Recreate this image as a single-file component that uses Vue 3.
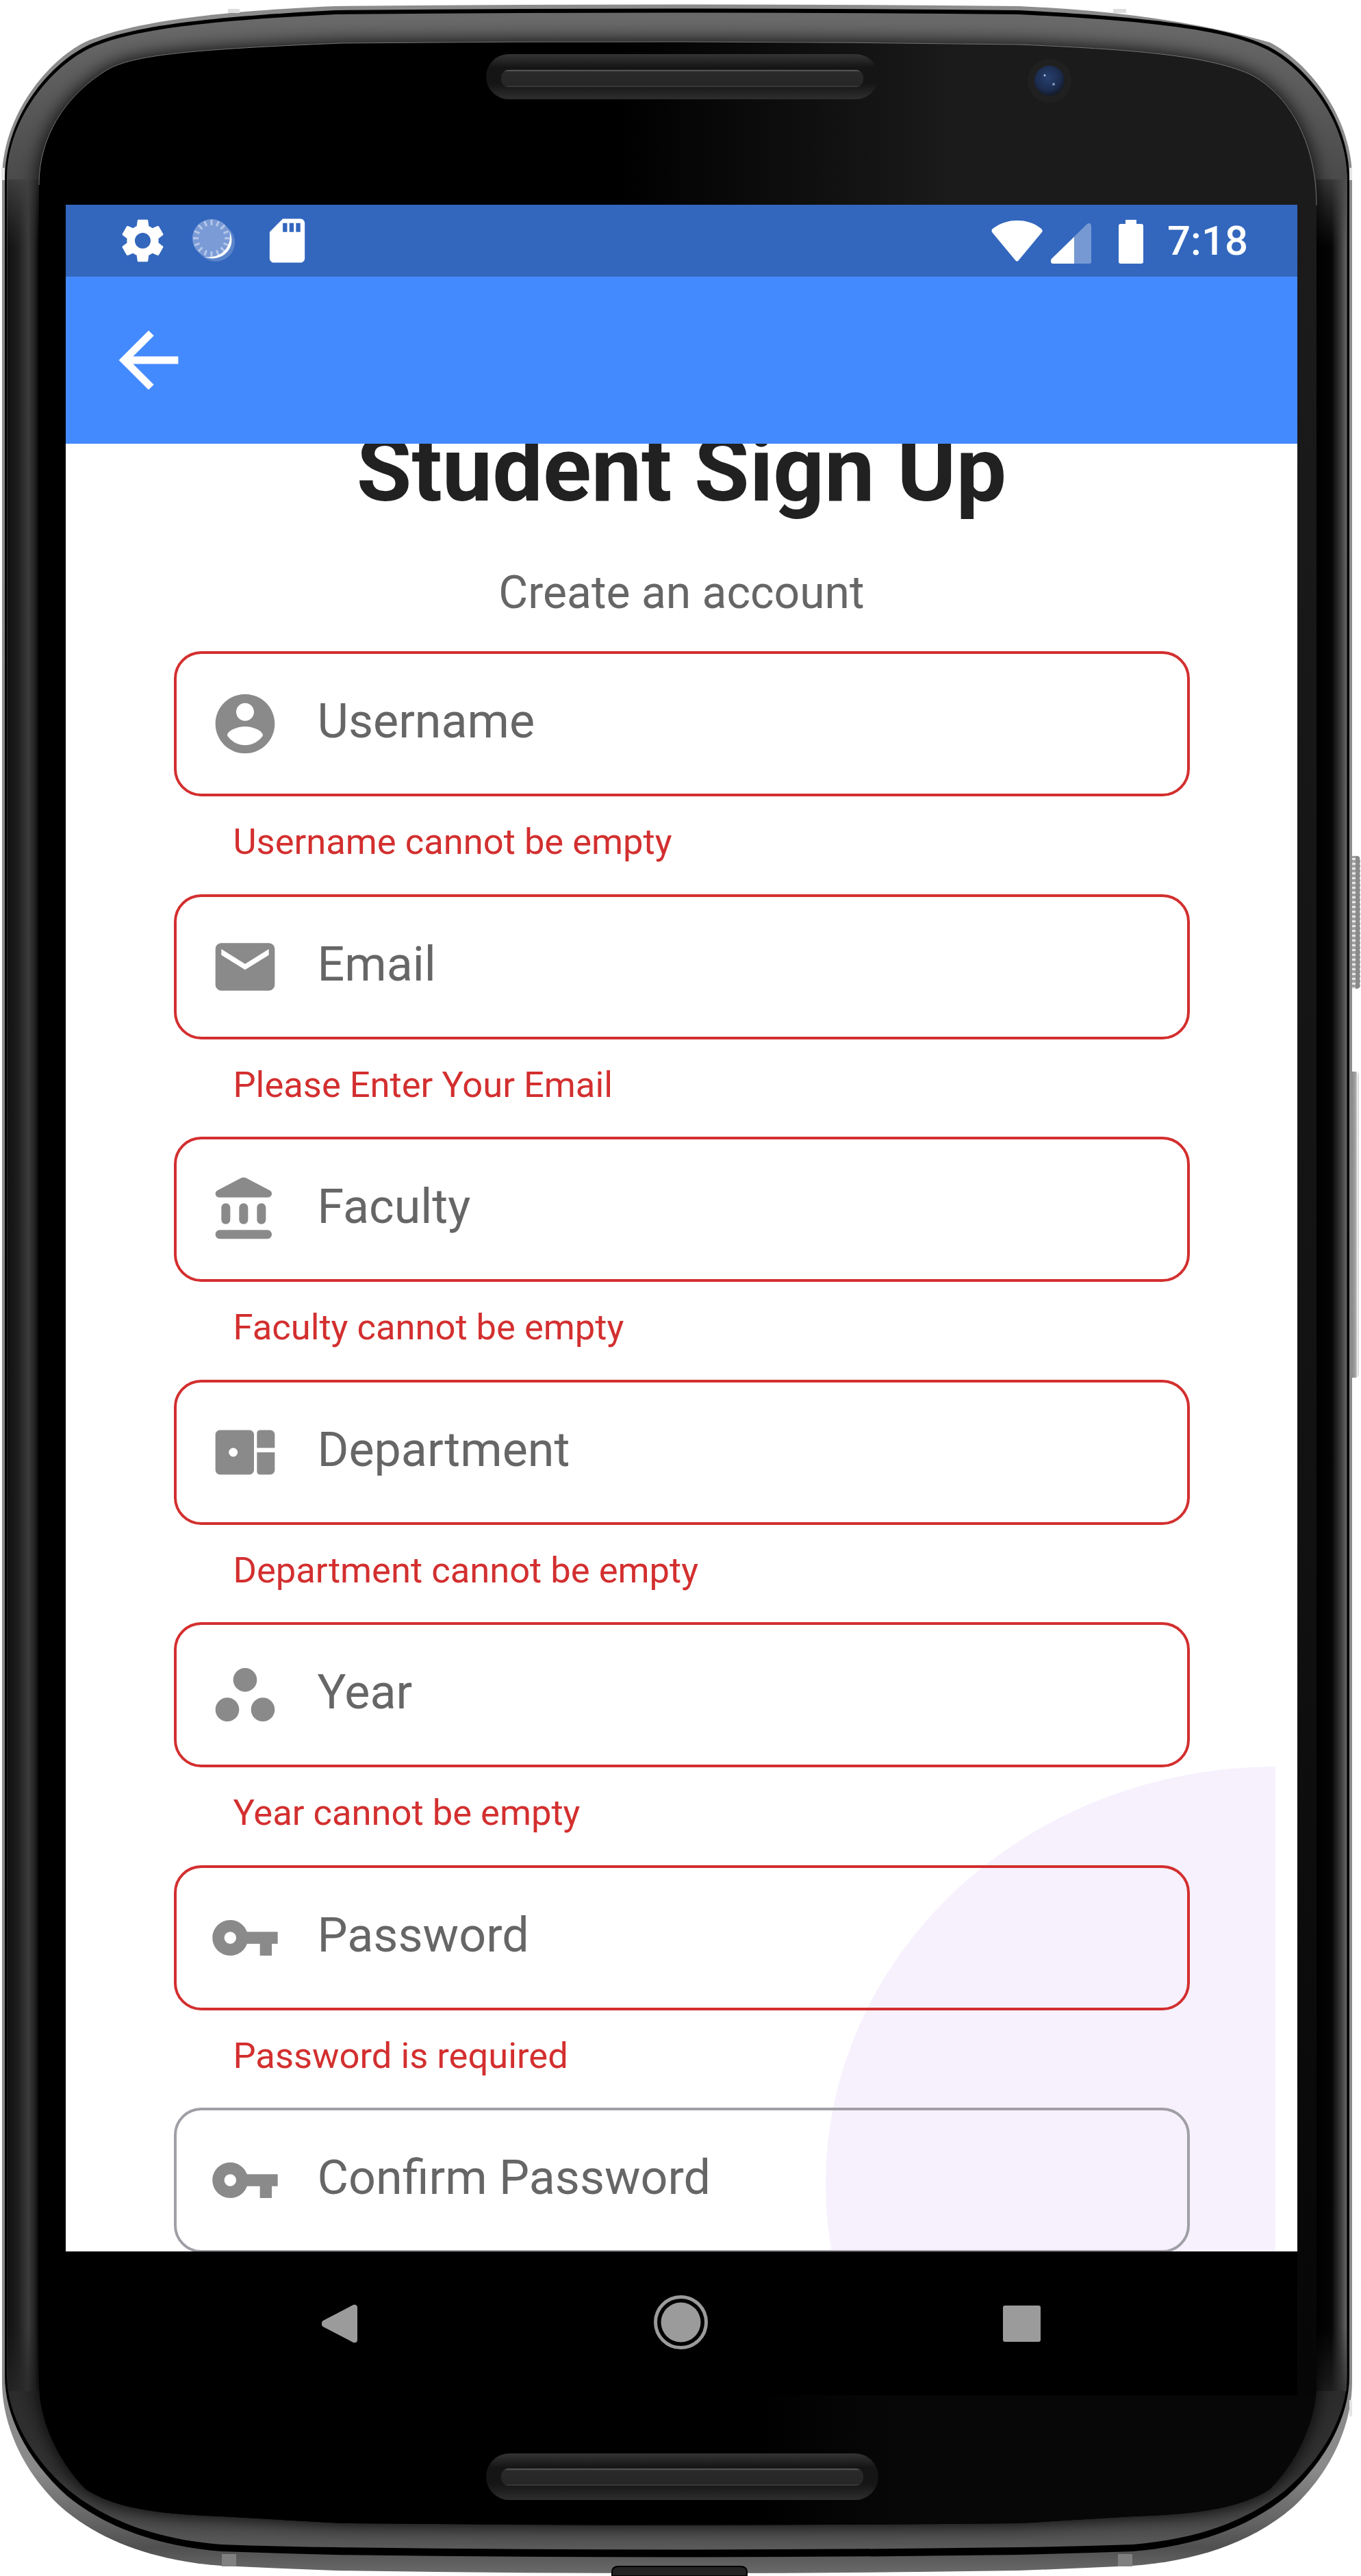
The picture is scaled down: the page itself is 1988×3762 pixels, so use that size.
<template>
  <div class="device">
    <!-- phone body drawn behind the screen -->
    <svg class="frame" width="1988" height="3762" viewBox="0 0 1988 3762">
      <defs>
        <linearGradient id="metal" x1="0" y1="0" x2="0" y2="1">
          <stop offset="0" stop-color="#8c8c8c" />
          <stop offset="0.96" stop-color="#8a8a8a" />
          <stop offset="0.99" stop-color="#505050" />
          <stop offset="1" stop-color="#6a6a6a" />
        </linearGradient>
        <linearGradient id="bezelFill" x1="0" y1="0" x2="0" y2="1">
          <stop offset="0" stop-color="#6a6a6a" />
          <stop offset="0.1" stop-color="#3a3a3a" />
          <stop offset="0.9" stop-color="#222" />
          <stop offset="0.97" stop-color="#333" />
          <stop offset="1" stop-color="#5a5a5a" />
        </linearGradient>
        <linearGradient id="glassTop" gradientUnits="userSpaceOnUse" x1="900" y1="0" x2="1400" y2="0">
          <stop offset="0" stop-color="#000" />
          <stop offset="1" stop-color="#1b1b1b" />
        </linearGradient>
        <linearGradient id="glassBottom" gradientUnits="userSpaceOnUse" x1="1100" y1="0" x2="1300" y2="0">
          <stop offset="0" stop-color="#000" />
          <stop offset="1" stop-color="#070707" />
        </linearGradient>
        <linearGradient id="rightStrip" x1="0" y1="0" x2="0" y2="1">
          <stop offset="0" stop-color="#1b1b1b" />
          <stop offset="0.6" stop-color="#111" />
          <stop offset="1" stop-color="#060606" />
        </linearGradient>
        <linearGradient id="sideLeft" x1="0" y1="0" x2="1" y2="0">
          <stop offset="0" stop-color="#111" />
          <stop offset="0.34" stop-color="#1e1e1e" />
          <stop offset="0.66" stop-color="#3c3c3c" />
          <stop offset="0.88" stop-color="#202020" />
          <stop offset="1" stop-color="#000" />
        </linearGradient>
        <linearGradient id="sideRight" x1="0" y1="0" x2="1" y2="0">
          <stop offset="0" stop-color="#000" />
          <stop offset="0.5" stop-color="#040404" />
          <stop offset="0.8" stop-color="#3a3a3a" />
          <stop offset="1" stop-color="#666" />
        </linearGradient>
        <linearGradient id="fadeEnds" gradientUnits="userSpaceOnUse" x1="0" y1="230" x2="0" y2="3530">
          <stop offset="0" stop-color="#000" />
          <stop offset="0.04" stop-color="#fff" />
          <stop offset="0.96" stop-color="#fff" />
          <stop offset="1" stop-color="#000" />
        </linearGradient>
        <mask id="sideMask" maskUnits="userSpaceOnUse" x="0" y="0" width="1988" height="3762">
          <rect x="0" y="0" width="1988" height="3762" fill="url(#fadeEnds)" />
        </mask>
        <linearGradient id="speakerOuter" x1="0" y1="0" x2="0" y2="1">
          <stop offset="0" stop-color="#343434" />
          <stop offset="0.3" stop-color="#151515" />
          <stop offset="0.65" stop-color="#151515" />
          <stop offset="1" stop-color="#2e2e2e" />
        </linearGradient>
        <linearGradient id="speakerInner" x1="0" y1="0" x2="0" y2="1">
          <stop offset="0" stop-color="#666" />
          <stop offset="0.12" stop-color="#2a2a2a" />
          <stop offset="0.9" stop-color="#262626" />
          <stop offset="1" stop-color="#444" />
        </linearGradient>
        <radialGradient id="lens" cx="0.45" cy="0.4" r="0.6">
          <stop offset="0" stop-color="#27406f" />
          <stop offset="0.7" stop-color="#1c2c4e" />
          <stop offset="1" stop-color="#141a28" />
        </radialGradient>
        <linearGradient id="longKey" x1="0" y1="0" x2="1" y2="0">
          <stop offset="0" stop-color="#6f6f6f" />
          <stop offset="0.7" stop-color="#a8a8a8" />
          <stop offset="0.85" stop-color="#f4f4f4" />
          <stop offset="1" stop-color="#c8c8c8" />
        </linearGradient>
        <pattern id="ridges" patternUnits="userSpaceOnUse" width="12" height="7">
          <rect width="12" height="7" fill="#8a8a8a" />
          <rect x="6" y="0" width="6" height="3" fill="#e8e8e8" />
          <rect x="6" y="3" width="6" height="4" fill="#a0a0a0" />
        </pattern>
        <filter id="soft" filterUnits="userSpaceOnUse" x="0" y="0" width="1988" height="3762">
          <feGaussianBlur stdDeviation="14" />
        </filter>
        <clipPath id="glassClip"><path :d="glass" /></clipPath>
      </defs>

      <!-- side keys -->
      <rect x="1970" y="1250" width="17" height="194" rx="5" fill="url(#ridges)" />
      <rect x="1970" y="1565" width="15" height="447" rx="5" fill="url(#longKey)" />

      <path :d="outer" fill="url(#metal)" />
      <path :d="band" fill="#000" />
      <path :d="bezel" fill="url(#bezelFill)" />
      <path :d="glass" fill="#000" filter="url(#soft)" />
      <g mask="url(#sideMask)">
        <rect x="11" y="262" width="46" height="3230" fill="url(#sideLeft)" />
        <rect x="1923" y="262" width="44" height="3230" fill="url(#sideRight)" />
      </g>
      <path :d="glass" fill="#000" />
      <g clip-path="url(#glassClip)">
        <rect x="0" y="0" width="1988" height="300" fill="url(#glassTop)" />
        <rect x="0" y="3498" width="1988" height="264" fill="url(#glassBottom)" />
        <rect x="1895" y="299" width="30" height="3199" fill="url(#rightStrip)" />
      </g>
      <path :d="glassTop" fill="none" stroke="#777" stroke-width="1" />

      <!-- antenna breaks on the rim -->
      <rect x="333" y="13" width="17" height="6" fill="#dedede" />
      <rect x="1626" y="13" width="19" height="6" fill="#dedede" />
      <rect x="2" y="245" width="5" height="18" fill="#e4e4e4" />
      <rect x="1971" y="245" width="4" height="18" fill="#e4e4e4" />
      <rect x="1971" y="3505" width="4" height="24" fill="#e4e4e4" />
      <rect x="1633" y="3730" width="21" height="18" fill="#808080" />
      <rect x="324" y="3730" width="21" height="18" fill="#808080" />

      <!-- earpiece and bottom speaker -->
      <g v-for="s in speakers" :key="s.y">
        <rect x="710" :y="s.y" width="573" :height="s.h" :rx="s.h / 2" fill="url(#speakerOuter)" />
        <rect x="732" :y="s.y + s.inset" width="529" height="25" rx="11" fill="url(#speakerInner)" />
      </g>

      <!-- front camera -->
      <circle cx="1533" cy="118" r="32" fill="#202020" />
      <circle cx="1533" cy="118" r="22" fill="url(#lens)" />
      <circle cx="1526" cy="110" r="1.5" fill="#b8c8e8" />
      <circle cx="1539" cy="123" r="2" fill="#7f94bd" />

      <!-- charging port -->
      <path d="M894 3762 v-6 q0 -8 10 -8 h177 q10 0 10 8 v6 z" fill="#222" stroke="#000" stroke-width="2" />
    </svg>

    <div class="screen">
      <div class="status-bar">
        <svg class="s-gear" width="77" height="77" viewBox="0 0 24 24" fill="#fff"><path :d="icons.gear" /></svg>
        <svg class="s-dial" width="77" height="77" viewBox="0 0 77 77">
          <circle cx="41" cy="41" r="28" fill="#fff" fill-opacity="0.2" />
          <circle cx="35" cy="35" r="28" fill="#7a9bd6" />
          <line v-for="t in dialTicks" :key="t.x1" :x1="t.x1" :y1="t.y1" :x2="t.x2" :y2="t.y2" stroke="#b4c7e8" stroke-width="3" />
          <path d="M61 24 C66 44 52 66 24 62 C48 72 74 50 61 24 Z" fill="#fff" />
        </svg>
        <svg class="s-sd" width="77" height="77" viewBox="0 0 24 24" fill="#fff"><path :d="icons.sd" /></svg>
        <div class="status-right">
          <svg width="75" height="60" viewBox="0 0 75 60" fill="#fff">
            <path d="M2 12C14 3 26 0 37.5 0 50 0 62 3 73 12c2 2 2 4 1 5L40 58c-1.500 2-3.500 2-5 0L1 17C0 15 .5 13 2 12z" />
          </svg>
          <svg class="s-signal" width="59" height="59" viewBox="0 0 59 59">
            <path d="M1 52L53 1c3-2 6-1 6 4v51c0 2-1 3-3 3H3c-3 0-4-4-2-7z" fill="#fff" fill-opacity="0.33" />
            <path d="M1 52l33-32v39H3c-3 0-4-4-2-7z" fill="#fff" />
          </svg>
          <svg class="s-battery" width="36" height="64" viewBox="0 0 36 64" fill="#fff">
            <path d="M10 0h16v6h7c2 0 3 1 3 3v52c0 2-1 3-3 3H3c-2 0-3-1-3-3V9c0-2 1-3 3-3h7z" />
          </svg>
          <span class="clock">7:18</span>
        </div>
      </div>

      <div class="app-bar">
        <svg width="130" height="130" viewBox="0 0 24 24" fill="#fff"><path :d="icons.back" /></svg>
      </div>

      <div class="content">
        <div class="blob-clip"><div class="blob"></div></div>
        <h1 class="title">Student Sign Up</h1>
        <p class="subtitle">Create an account</p>
        <form class="form" @submit.prevent>
          <div v-for="f in fields" :key="f.label" class="group">
            <div class="field" :class="{ invalid: f.error }">
              <svg class="field-icon" width="104" height="104" viewBox="0 0 24 24" fill="#8a8a8a">
                <path :d="f.icon" fill-rule="evenodd" />
              </svg>
              <span class="placeholder">{{ f.label }}</span>
            </div>
            <div v-if="f.error" class="error">{{ f.error }}</div>
          </div>
        </form>
      </div>
    </div>

    <div class="nav-bar">
      <svg width="52" height="57" viewBox="0 0 52 57" fill="#9b9b9b">
        <path d="M2 24L46 1c3-1 6 0 6 4v47c0 4-3 5-6 4L2 33c-3-2-3-7 0-9z" />
      </svg>
      <svg class="nav-home" width="79" height="79" viewBox="0 0 79 79">
        <circle cx="39.5" cy="39.500" r="37" fill="none" stroke="#9b9b9b" stroke-width="5" />
        <circle cx="39.5" cy="39.500" r="29" fill="#9b9b9b" />
      </svg>
      <div class="nav-square"></div>
    </div>
  </div>
</template>

<script setup>
const outer = 'M3 260C3 170 68 90 123 62 178 38 278 18 490 9Q989 4 1488 9 1700 18 1855 62C1910 90 1975 170 1975 260L1975 3479C1975 3540 1945 3610 1888 3662 1830 3712 1750 3740 1655 3747Q1570 3751 1488 3754 989 3762 490 3754 408 3751 323 3747C228 3740 148 3712 90 3662 33 3610 3 3540 3 3479Z'
const band = 'M7 262C7 172 70 96 125 68 180 41 280 26 490 15Q989 10 1488 15C1698 26 1798 41 1853 68 1908 96 1971 172 1971 262L1971 3470C1971 3530 1936 3595 1880 3645 1825 3690 1750 3718 1655 3726Q1570 3729 1488 3731 989 3738 490 3731 408 3729 323 3726C228 3718 153 3690 98 3645 42 3595 7 3530 7 3470Z'
const bezel = 'M10 262C10 175 73 100 128 72 182 46 282 31 490 21Q989 16 1488 21C1696 31 1796 46 1850 72 1905 100 1968 175 1968 262L1968 3468C1968 3526 1933 3590 1876 3638 1820 3682 1750 3708 1655 3716Q1570 3719 1488 3720 989 3727 490 3720 408 3719 323 3716C228 3708 158 3682 102 3638 45 3590 10 3526 10 3468Z'
const glassTop = 'M57 270C57 195 100 135 160 100 200 80 280 72 500 63Q994 58 1488 65C1650 72 1760 80 1825 108 1880 135 1923 205 1923 300'
const glass = glassTop + 'L1923 3480C1923 3540 1890 3600 1855 3635 1810 3665 1740 3672 1655 3675Q1570 3680 1488 3685 994 3690 500 3685 410 3680 325 3675C240 3672 170 3665 125 3635 90 3600 57 3540 57 3480Z'

const speakers = [
  { y: 79, h: 66, inset: 23 },
  { y: 3583, h: 68, inset: 22 }
]

// 16 tick marks round the little clock dial in the status bar
const dialTicks = Array.from({ length: 16 }, (_, i) => {
  const a = (i / 16) * Math.PI * 2
  return {
    x1: 35 + Math.cos(a) * 19,
    y1: 35 + Math.sin(a) * 19,
    x2: 35 + Math.cos(a) * 27,
    y2: 35 + Math.sin(a) * 27
  }
})

const icons = {
  gear: 'M19.14 12.94c.04-.3.06-.61.06-.94 0-.32-.02-.64-.07-.94l2.03-1.58c.18-.14.23-.41.12-.61l-1.92-3.32c-.12-.22-.37-.29-.59-.22l-2.39.96c-.5-.38-1.03-.7-1.62-.94l-.36-2.54c-.04-.24-.24-.41-.48-.41h-3.84c-.24 0-.43.17-.47.41l-.36 2.54c-.59.24-1.13.57-1.62.94l-2.39-.96c-.22-.08-.47 0-.59.22L2.74 8.87c-.12.21-.08.47.12.61l2.03 1.58c-.05.3-.09.63-.09.94s.02.64.07.94l-2.03 1.58c-.18.14-.23.41-.12.61l1.92 3.32c.12.22.37.29.59.22l2.39-.96c.5.38 1.03.7 1.62.94l.36 2.54c.05.24.24.41.48.41h3.84c.24 0 .44-.17.47-.41l.36-2.54c.59-.24 1.13-.56 1.62-.94l2.39.96c.22.08.47 0 .59-.22l1.92-3.32c.12-.22.07-.47-.12-.61l-2.01-1.58zM12 15.6c-1.98 0-3.6-1.62-3.6-3.6s1.62-3.6 3.6-3.6 3.6 1.62 3.6 3.6-1.62 3.6-3.6 3.6z',
  sd: 'M18 2h-8L4.020 8 4 20c0 1.100.9 2 2 2h12c1.100 0 2-.9 2-2V4c0-1.100-.9-2-2-2zm-6 6h-2V4h2v4zm3 0h-2V4h2v4zm3 0h-2V4h2v4z',
  back: 'M20 11H7.830l5.590-5.590L12 4l-8 8 8 8 1.410-1.410L7.830 13H20v-2z'
}

const key = 'M12.650 10C11.830 7.670 9.610 6 7 6c-3.310 0-6 2.690-6 6s2.690 6 6 6c2.610 0 4.830-1.670 5.650-4H17v4h4v-4h2v-4H12.650zM7 14c-1.100 0-2-.9-2-2s.9-2 2-2 2 .9 2 2-.9 2-2 2z'

const fields = [
  {
    label: 'Username',
    error: 'Username cannot be empty',
    icon: 'M12 2C6.480 2 2 6.480 2 12s4.480 10 10 10 10-4.480 10-10S17.520 2 12 2zm0 3c1.660 0 3 1.340 3 3s-1.340 3-3 3-3-1.340-3-3 1.340-3 3-3zm0 14.200c-2.500 0-4.710-1.280-6-3.220.03-1.990 4-3.080 6-3.080 1.990 0 5.970 1.090 6 3.080-1.290 1.940-3.500 3.220-6 3.220z'
  },
  {
    label: 'Email',
    error: 'Please Enter Your Email',
    icon: 'M20 4H4c-1.100 0-1.990.9-1.990 2L2 18c0 1.100.9 2 2 2h16c1.100 0 2-.9 2-2V6c0-1.100-.9-2-2-2zm0 4l-8 5-8-5V6l8 5 8-5v2z'
  },
  {
    label: 'Faculty',
    error: 'Faculty cannot be empty',
    icon: 'M4 11.500v4c0 .83.67 1.500 1.500 1.500S7 16.330 7 15.500v-4c0-.83-.67-1.500-1.500-1.500S4 10.670 4 11.500zm6 0v4c0 .83.67 1.500 1.500 1.500s1.500-.67 1.500-1.500v-4c0-.83-.67-1.500-1.500-1.500s-1.500.67-1.500 1.500zM3.500 22h16c.83 0 1.500-.67 1.500-1.500s-.67-1.500-1.500-1.500h-16c-.83 0-1.500.67-1.500 1.500S2.670 22 3.500 22zM16 11.500v4c0 .83.67 1.500 1.500 1.500s1.500-.67 1.500-1.500v-4c0-.83-.67-1.500-1.500-1.500s-1.500.67-1.500 1.500zM10.570 1.490l-7.900 4.160c-.41.21-.67.64-.67 1.100C2 7.440 2.560 8 3.250 8h16.510C20.440 8 21 7.440 21 6.750c0-.46-.26-.89-.67-1.100l-7.900-4.160c-.58-.31-1.280-.31-1.860 0z'
  },
  {
    label: 'Department',
    error: 'Department cannot be empty',
    icon: 'M3.500 4.500h10A1.500 1.500 0 0 1 15 6v12a1.500 1.500 0 0 1-1.500 1.500h-10A1.500 1.500 0 0 1 2 18V6a1.500 1.500 0 0 1 1.500-1.500zM8 10.500a1.500 1.500 0 1 0 0 3 1.500 1.500 0 0 0 0-3zM17 4.500h3.500A1.500 1.500 0 0 1 22 6v4.500h-6v-5a1 1 0 0 1 1-1zM16 12h6v6a1.500 1.500 0 0 1-1.500 1.500H17a1 1 0 0 1-1-1z'
  },
  {
    label: 'Year',
    error: 'Year cannot be empty',
    icon: 'M6 13c-2.200 0-4 1.800-4 4s1.800 4 4 4 4-1.800 4-4-1.800-4-4-4zm6-10C9.800 3 8 4.800 8 7s1.800 4 4 4 4-1.800 4-4-1.800-4-4-4zm6 10c-2.200 0-4 1.800-4 4s1.800 4 4 4 4-1.800 4-4-1.800-4-4-4z'
  },
  { label: 'Password', error: 'Password is required', icon: key },
  { label: 'Confirm Password', error: '', icon: key }
]
</script>

<style>
html,
body {
  margin: 0;
  background: #fff;
}
</style>

<style scoped>
.device {
  position: relative;
  width: 1988px;
  height: 3762px;
  padding: 299px 93px 0 96px;
  box-sizing: border-box;
  overflow: hidden;
  font-family: Roboto, "Liberation Sans", sans-serif;
}

.frame {
  position: absolute;
  top: 0;
  left: 0;
}

.screen {
  position: relative;
  display: flex;
  flex-direction: column;
  width: 1799px;
  height: 2989px;
  overflow: hidden;
  background: #fff;
}

.status-bar {
  display: flex;
  align-items: center;
  flex: none;
  height: 105px;
  padding: 0 72px 0 74px;
  background: #3367be;
}

.s-dial {
  margin-left: 27px;
}

.s-sd {
  margin-left: 30px;
}

.status-right {
  display: flex;
  align-items: center;
  margin-left: auto;
}

.s-signal {
  margin-left: 12px;
  margin-top: 8px;
}

.s-battery {
  margin-left: 40px;
  margin-top: 2px;
}

.clock {
  margin-left: 35px;
  width: 118px;
  color: #fff;
  font-size: 60px;
  font-weight: 500;
  line-height: 1;
  white-space: nowrap;
}

.app-bar {
  display: flex;
  align-items: center;
  flex: none;
  height: 244px;
  padding-left: 56px;
  background: #448aff;
}

.content {
  position: relative;
  flex: 1;
  min-height: 0;
  display: flex;
  flex-direction: column;
  align-items: center;
  overflow: hidden;
}

.blob-clip {
  position: absolute;
  top: 1932px;
  left: 1110px;
  width: 657px;
  height: 1000px;
  overflow: hidden;
}

.blob {
  width: 1314px;
  height: 1218px;
  border-radius: 50%;
  background: #f7f1fe;
}

.title {
  position: relative;
  flex: none;
  margin: -32px 0 0;
  color: #212121;
  font-size: 131px;
  font-weight: 700;
  line-height: 140px;
}

.subtitle {
  position: relative;
  flex: none;
  margin: 73px 0 0;
  color: #666;
  font-size: 66px;
  line-height: 74px;
}

.form {
  position: relative;
  flex: none;
  width: 1484px;
  margin-top: 48px;
}

.field {
  display: flex;
  align-items: center;
  box-sizing: border-box;
  height: 212px;
  padding-left: 48px;
  border: 4px solid #a09fa6;
  border-radius: 40px;
}

.field.invalid {
  border-color: #d32f2f;
}

.field-icon {
  flex: none;
  margin-right: 54px;
}

.placeholder {
  color: #666;
  font-size: 70px;
  line-height: 82px;
  margin-top: -8px;
}

.error {
  box-sizing: border-box;
  height: 142.5px;
  padding: 37px 0 0 87px;
  color: #d32f2f;
  font-size: 52.5px;
  line-height: 58px;
}

.nav-bar {
  position: relative;
  display: flex;
  align-items: center;
  height: 210px;
  padding-left: 374px;
}

.nav-home {
  margin-left: 433px;
  margin-top: -4px;
}

.nav-square {
  width: 55px;
  height: 53px;
  margin-left: 431px;
  border-radius: 3px;
  background: #9b9b9b;
}
</style>
